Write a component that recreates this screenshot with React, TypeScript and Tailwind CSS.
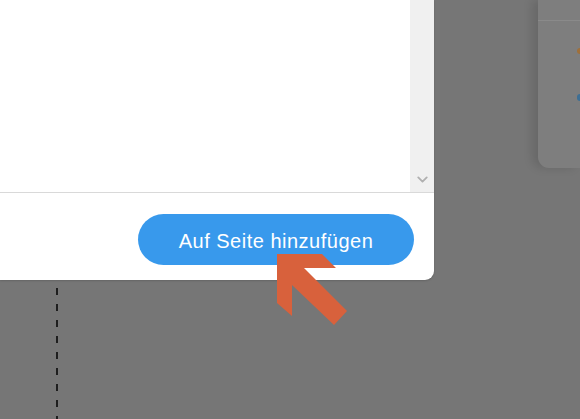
import { ChevronDown } from 'lucide-react'

export default function App() {
  return (
    <div className="relative w-[580px] h-[419px] bg-[#767676] overflow-hidden flex items-start font-['Liberation_Sans',Arial,sans-serif]">
      {/* Dialog panel */}
      <div className="w-[434px] h-[280px] shrink-0 bg-white rounded-br-[9px] flex flex-col shadow-[0_1px_2px_rgba(0,0,0,0.15)]">
        <div className="flex h-[193px] border-b border-[#d9d9d9]">
          <div className="flex-1" />
          <div className="w-[24px] bg-[#f0f0f0] flex flex-col justify-end items-center pb-[4px]">
            <ChevronDown className="w-[17px] h-[17px] text-[#b0b0b0]" strokeWidth={2.6} />
          </div>
        </div>
        <div className="flex-1 flex items-start justify-end pt-[21px] pr-[20px]">
          <button className="w-[276px] h-[51px] rounded-full bg-[#3899ec] text-white text-[20px] tracking-[0.5px] pt-[2px]">
            Auf Seite hinzufügen
          </button>
        </div>
      </div>

      {/* Side panel */}
      <div className="ml-[104px] w-[42px] h-[168px] shrink-0 bg-[#7e7e7e] rounded-bl-[11px] shadow-[-6px_0_10px_rgba(0,0,0,0.12)] flex flex-col">
        <div className="h-[21px] border-b border-[#8a8a8a]" />
        <div className="flex flex-col items-end gap-[40px] pt-[27px]">
          <div className="w-[3px] h-[6px] bg-[#a0703a] rounded-l-full" />
          <div className="w-[3px] h-[7px] bg-[#3d6f95] rounded-l-full" />
        </div>
      </div>

      {/* Dashed guide */}
      <div className="absolute left-[56px] top-[288px] bottom-0 w-[2px] bg-[repeating-linear-gradient(to_bottom,#1e1e1e_0px,#1e1e1e_7px,transparent_7px,transparent_16px)]" />

      {/* Pointer arrow */}
      <svg className="absolute left-0 top-0" width="580" height="419" viewBox="0 0 580 419">
        <polygon
          points="277,254 322,254 336,268 304,268 347,311 334,325 292,285 292,316 277,303"
          fill="#d8613c"
        />
      </svg>
    </div>
  )
}
